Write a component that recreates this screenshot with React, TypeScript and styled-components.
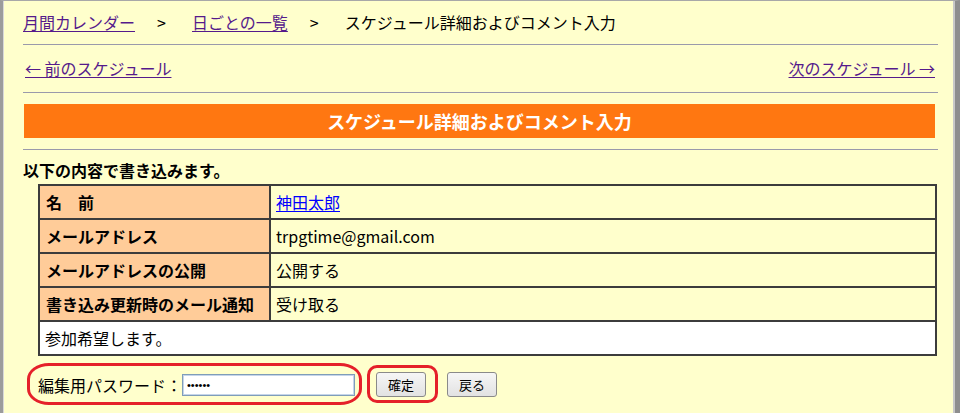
import React from 'react';
import styled, { createGlobalStyle } from 'styled-components';

const GlobalStyle = createGlobalStyle`
  html, body {
    margin: 0;
    padding: 0;
    background: #ffffcc;
  }
  body {
    font-family: "Noto Sans CJK JP", "Noto Sans", sans-serif;
    font-size: 16px;
    color: #000;
  }
`;

const Frame = styled.div`
  min-height: 100vh;
  box-sizing: border-box;
  background: #ffffcc;
  border-top: 1px solid #a8a8a8;
  border-left: 3px solid #9c9c9c;
  border-right: 5px solid #8e8e8e;
  box-shadow: inset 1px 0 0 #d8d8d8, inset -2px 0 0 #c8c8c8;
  overflow: hidden;
`;

const Content = styled.div`
  padding: 0 17px 0 20px;
`;

const Breadcrumb = styled.div`
  margin-top: 11px;
  height: 20px;
  line-height: 20px;
  display: flex;
  align-items: center;
  white-space: nowrap;
`;

const NavLink = styled.a`
  color: #551a8b;
  text-decoration: underline;
  text-underline-offset: 2px;
  cursor: pointer;
`;

const Sep = styled.span`
  display: inline-block;
  width: 10px;
  margin: 0 25px 0 22px;
`;

const Rule = styled.hr<{ $top: number }>`
  margin: ${({ $top }) => $top}px 0 0;
  border: 0;
  height: 1px;
  background: #9a9aab;
`;

const PagerRow = styled.div`
  margin-top: 13px;
  height: 20px;
  line-height: 20px;
  display: flex;
  justify-content: space-between;
  padding: 0 3px 0 2px;
`;

const TitleBar = styled.div`
  margin: 11px 3px 0 1px;
  height: 34px;
  background: #ff7711;
  color: #fff;
  font-weight: bold;
  font-size: 18px;
  display: flex;
  align-items: center;
  justify-content: center;
`;

const Notice = styled.div`
  margin-top: 10px;
  height: 20px;
  line-height: 20px;
  font-weight: bold;
  font-size: 16px;
`;

const Table = styled.table`
  margin: 4px 1px 0 15px;
  width: 899px;
  border-collapse: collapse;
  border: 2px solid #3c3c3c;
  font-size: 16px;
`;

const Label = styled.th`
  width: 219px;
  height: 32px;
  padding: 0 4px 0 6px;
  text-align: left;
  font-weight: bold;
  background: #ffcc99;
  border: 2px solid #3c3c3c;
  white-space: nowrap;
`;

const Value = styled.td<{ $white?: boolean }>`
  height: 32px;
  padding: 0 5px;
  background: ${({ $white }) => ($white ? '#ffffff' : '#ffffcc')};
  border: 2px solid #3c3c3c;
`;

const NameLink = styled.a`
  color: #0000ff;
  text-decoration: underline;
  text-underline-offset: 2px;
`;

const FormRow = styled.div`
  margin: 16px 0 0 15px;
  display: flex;
  align-items: center;
  height: 25px;
`;

const Marked = styled.div<{ $inset: string; $radius: string }>`
  position: relative;
  display: flex;
  align-items: center;
  &::before {
    content: "";
    position: absolute;
    inset: ${({ $inset }) => $inset};
    border: 3px solid #e5202a;
    border-radius: ${({ $radius }) => $radius};
    pointer-events: none;
  }
`;

const FieldLabel = styled.span`
  font-size: 16px;
  width: 144px;
  white-space: nowrap;
`;

const PasswordInput = styled.input`
  box-sizing: border-box;
  width: 173px;
  height: 22px;
  border: 1px solid #7f9db9;
  box-shadow: inset 0 0 0 1px #c5d5ea;
  background: #fff;
  padding: 0 4px;
  font-size: 11px;
  outline: none;
`;

const Button = styled.button<{ $gap: number }>`
  box-sizing: border-box;
  margin-left: ${({ $gap }) => $gap}px;
  width: 50px;
  height: 25px;
  border: 1px solid #8a8a8a;
  border-radius: 3px;
  background: linear-gradient(#f6f6f6, #e2e2e2);
  font-family: "Noto Sans CJK JP", sans-serif;
  font-size: 13px;
  color: #000;
  padding: 0;
`;

export default function App() {
  return (
    <>
      <GlobalStyle />
      <Frame>
        <Content>
          <Breadcrumb>
            <NavLink>月間カレンダー</NavLink>
            <Sep>&gt;</Sep>
            <NavLink>日ごとの一覧</NavLink>
            <Sep>&gt;</Sep>
            <span>スケジュール詳細およびコメント入力</span>
          </Breadcrumb>
          <Rule $top={12} />
          <PagerRow>
            <NavLink>← 前のスケジュール</NavLink>
            <NavLink>次のスケジュール →</NavLink>
          </PagerRow>
          <Rule $top={14} />
          <TitleBar>スケジュール詳細およびコメント入力</TitleBar>
          <Rule $top={11} />
          <Notice>以下の内容で書き込みます。</Notice>
          <Table>
            <tbody>
              <tr>
                <Label>名　前</Label>
                <Value>
                  <NameLink>神田太郎</NameLink>
                </Value>
              </tr>
              <tr>
                <Label>メールアドレス</Label>
                <Value>trpgtime@gmail.com</Value>
              </tr>
              <tr>
                <Label>メールアドレスの公開</Label>
                <Value>公開する</Value>
              </tr>
              <tr>
                <Label>書き込み更新時のメール通知</Label>
                <Value>受け取る</Value>
              </tr>
              <tr>
                <Value $white colSpan={2}>参加希望します。</Value>
              </tr>
            </tbody>
          </Table>
          <FormRow>
            <Marked $inset="-10px -7px -8px -11px" $radius="22px / 16px">
              <FieldLabel>編集用パスワード：</FieldLabel>
              <PasswordInput type="password" defaultValue="abcdef" />
            </Marked>
            <Marked $inset="-7px -12px -6px -9px" $radius="10px" style={{ marginLeft: 21 }}>
              <Button $gap={0}>確定</Button>
            </Marked>
            <Button $gap={21}>戻る</Button>
          </FormRow>
        </Content>
      </Frame>
    </>
  );
}
